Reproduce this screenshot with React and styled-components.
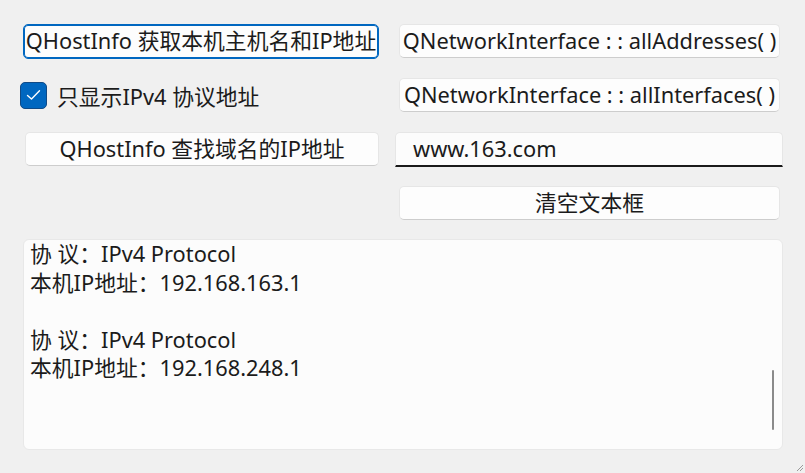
import React from 'react'
import styled, { createGlobalStyle } from 'styled-components'

const GlobalStyle = createGlobalStyle`
    html, body {
        margin: 0;
        padding: 0;
        background: #f0f0f0;
    }
    body {
        font-family: "Noto Sans", "Noto Sans CJK SC", sans-serif;
        color: #1b1b1b;
    }
`

const Window = styled.div`
    position: relative;
    width: 805px;
    height: 473px;
    box-sizing: border-box;
    padding: 21px 22px 23px 20px;
    background: #f0f0f0;
    display: flex;
    flex-direction: column;
    gap: 16px;
    overflow: hidden;
`

const Controls = styled.div`
    display: grid;
    grid-template-columns: 361px 388px;
    grid-auto-rows: 40px;
    column-gap: 14px;
    row-gap: 14px;
`

const Cell = styled.div`
    display: flex;
    align-items: center;
    padding: ${p => p.$pad || '0'};
`

const Button = styled.button`
    flex: 1;
    height: ${p => (p.$focused ? '35px' : '34px')};
    box-sizing: border-box;
    padding: 0;
    font-family: "Noto Sans", "Noto Sans CJK SC", sans-serif;
    font-size: 21.8px;
    color: #1b1b1b;
    white-space: nowrap;
    overflow: hidden;
    background: #fdfdfd;
    border: 1px solid ${p => (p.$focused ? '#0067c0' : '#e6e6e6')};
    border-bottom-color: ${p => (p.$focused ? '#0067c0' : '#cdcdcd')};
    border-radius: 5px;
    box-shadow: ${p => (p.$focused ? 'inset 0 0 0 1px #0067c0' : 'none')};
    line-height: 1;
`

const CheckRow = styled.label`
    display: flex;
    align-items: center;
    gap: 10px;
    font-size: 21.8px;
    white-space: nowrap;
`

const Box = styled.span`
    width: 27px;
    height: 27px;
    box-sizing: border-box;
    border-radius: 5px;
    background: #0067c0;
    border: 1px solid #104a86;
    display: flex;
    align-items: center;
    justify-content: center;
`

const LineEdit = styled.div`
    flex: 1;
    height: 35px;
    box-sizing: border-box;
    padding: 0 17px;
    display: flex;
    align-items: center;
    font-size: 21.8px;
    background: #fcfcfc;
    border: 1px solid #e6e6e6;
    border-bottom: 2px solid #1a1a1a;
    border-radius: 5px 5px 0 0;
`

const TextArea = styled.div`
    position: relative;
    flex: 1;
    margin-left: 3px;
    background: #fcfcfc;
    border: 1px solid #e8e8e8;
    border-radius: 6px;
    padding: 0 6px;
    overflow: hidden;
    font-size: 21.8px;
    line-height: 28.5px;
`

const Line = styled.div`
    white-space: pre;
    height: 28.5px;
`

const Thumb = styled.span`
    position: absolute;
    right: 8px;
    top: 130px;
    width: 2px;
    height: 60px;
    border-radius: 1px;
    background: #8b8b8b;
`

const Grip = styled.svg`
    position: absolute;
    right: 1px;
    bottom: 1px;
`

function App() {
    const lines = [
        '协 议：IPv4 Protocol',
        '本机IP地址：192.168.163.1',
        '',
        '协 议：IPv4 Protocol',
        '本机IP地址：192.168.248.1',
    ]
    return (
        <Window>
            <GlobalStyle />
            <Controls>
                <Cell $pad="0 2px 0 3px">
                    <Button $focused>QHostInfo 获取本机主机名和IP地址</Button>
                </Cell>
                <Cell $pad="0 3px 0 4px">
                    <Button>QNetworkInterface : : allAddresses( )</Button>
                </Cell>
                <Cell>
                    <CheckRow>
                        <Box>
                            <svg width="15" height="12" viewBox="0 0 15 12">
                                <path d="M1.5 6.5 L5.5 10 L13.5 1.8" fill="none" stroke="#fff" strokeWidth="1.4" strokeLinecap="round" strokeLinejoin="round" />
                            </svg>
                        </Box>
                        只显示IPv4 协议地址
                    </CheckRow>
                </Cell>
                <Cell $pad="0 3px 0 4px">
                    <Button>QNetworkInterface : : allInterfaces( )</Button>
                </Cell>
                <Cell $pad="0 2px 0 5px">
                    <Button>QHostInfo 查找域名的IP地址</Button>
                </Cell>
                <Cell>
                    <LineEdit>www.163.com</LineEdit>
                </Cell>
                <div />
                <Cell $pad="0 3px 0 4px">
                    <Button>清空文本框</Button>
                </Cell>
            </Controls>
            <TextArea>
                {lines.map((l, i) => <Line key={i}>{l}</Line>)}
                <Thumb />
            </TextArea>
            <Grip width="9" height="9" viewBox="0 0 9 9">
                <path d="M8 2 L2 8" stroke="#9a9a9a" strokeWidth="1" />
                <path d="M8 5 L5 8" stroke="#9a9a9a" strokeWidth="1" />
            </Grip>
        </Window>
    )
}

export default App
